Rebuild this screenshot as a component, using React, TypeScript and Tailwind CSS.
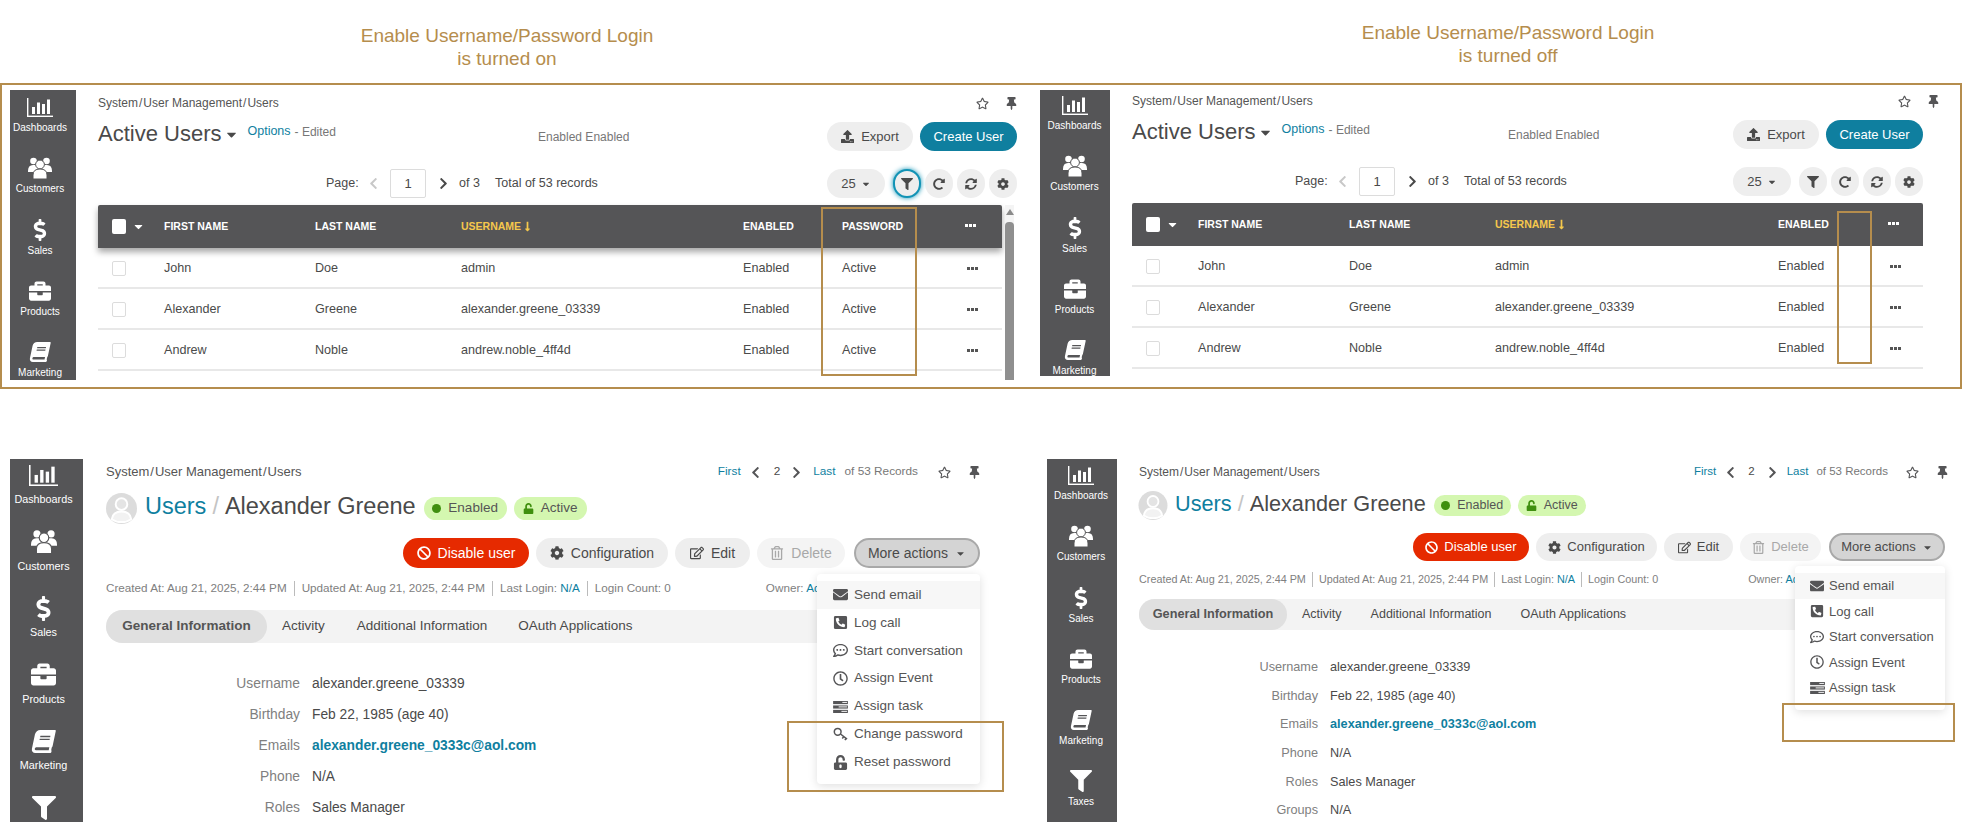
import React from 'react';
import {
  FaBan, FaBook, FaBriefcase, FaCaretDown, FaChevronLeft, FaChevronRight, FaCog, FaDollarSign, FaEnvelope, FaFilter,
  FaLongArrowAltDown, FaPhoneSquareAlt, FaRedoAlt, FaRegClock, FaRegCommentDots, FaRegEdit, FaRegStar,
  FaRegTrashAlt, FaSyncAlt, FaThumbtack, FaUnlock, FaUnlockAlt, FaUpload,
} from 'react-icons/fa';

// Dashboards icon: axes and four bars
const ChartIcon = ({ className }: { className: string }) => (
  <svg className={className} viewBox="0 0 26 19" fill="#fff" preserveAspectRatio="none">
    <rect x="0" y="0" width="1.4" height="19" />
    <rect x="0" y="17.6" width="26" height="1.4" />
    <rect x="5" y="9" width="3" height="7" />
    <rect x="10" y="4.5" width="3" height="11.5" />
    <rect x="15" y="6" width="3" height="10" />
    <rect x="20" y="1.5" width="3" height="14.5" />
  </svg>
);

const PeopleIcon = ({ className }: { className: string }) => (
  <svg className={className} viewBox="0 0 24 22" fill="#fff">
    <circle cx="5.5" cy="4" r="3.3" />
    <circle cx="18.5" cy="4" r="3.3" />
    <path d="M0 14q0-6 5-6h14q5 0 5 6v1H0z" />
    <circle cx="12" cy="7.5" r="4.4" stroke="#555557" strokeWidth="1" />
    <path d="M5 22v-4q0-6 7-6t7 6v4z" stroke="#555557" strokeWidth="1" />
  </svg>
);

const TasksIcon = ({ className }: { className: string }) => (
  <svg className={className} viewBox="0 0 16 13" fill="currentColor">
    <rect x="0" y="0" width="16" height="3.4" />
    <rect x="0" y="4.8" width="16" height="3.4" />
    <rect x="0" y="9.6" width="16" height="3.4" />
    <rect x="10" y="1" width="5" height="1" fill="#fff" />
    <rect x="6" y="5.9" width="9" height="1" fill="#fff" />
    <rect x="9" y="10.7" width="6" height="1" fill="#fff" />
  </svg>
);

const KeyIcon = ({ className }: { className: string }) => (
  <svg className={className} viewBox="0 0 16 14" fill="none" stroke="currentColor" strokeWidth="1.6">
    <circle cx="5" cy="4.6" r="3.6" />
    <path d="M8 7l7 5.5M11.5 9.8l-1.6 2M14 11.7l-1.3 1.8" />
  </svg>
);

const Avatar = ({ className }: { className: string }) => (
  <svg className={className} viewBox="0 0 32 32">
    <circle cx="16" cy="16" r="16" fill="#dcdcdc" />
    <circle cx="16" cy="11.5" r="6" fill="#e4e4e4" stroke="#fff" strokeWidth="2" />
    <path d="M6 27q1-8 10-8t10 8q-4 3-10 3t-10-3z" fill="#f2f2f2" stroke="#fff" strokeWidth="2" />
  </svg>
);

const Dots = () => (
  <span className="flex gap-px">
    <span className="w-[3px] h-[3px] bg-current" />
    <span className="w-[3px] h-[3px] bg-current" />
    <span className="w-[3px] h-[3px] bg-current" />
  </span>
);

const navItems = [
  { label: 'Dashboards', icon: 'chart' },
  { label: 'Customers', icon: 'people' },
  { label: 'Sales', icon: 'dollar' },
  { label: 'Products', icon: 'case' },
  { label: 'Marketing', icon: 'book' },
  { label: 'Taxes', icon: 'filter' },
];

const NavIcon = ({ name, big }: { name: string; big?: boolean }) => {
  if (name === 'chart') return <ChartIcon className={big ? 'w-[29px] h-[21px]' : 'w-[26px] h-[19px]'} />;
  if (name === 'people') return <PeopleIcon className={big ? 'w-[26px] h-[25px]' : 'w-[24px] h-[22px]'} />;
  if (name === 'dollar') return <FaDollarSign className={big ? 'text-[25px]' : 'text-[22px]'} />;
  if (name === 'case') return <FaBriefcase className={big ? 'text-[25px]' : 'text-[22px]'} />;
  if (name === 'book') return <FaBook className={big ? 'text-[23px] -skew-x-12' : 'text-[20px] -skew-x-12'} />;
  return <FaFilter className={big ? 'text-[24px]' : 'text-[22px]'} />;
};

const Sidebar = ({ className, itemClass, iconBox, labelClass, big }: { className: string; itemClass: string; iconBox: string; labelClass: string; big?: boolean }) => (
  <div className={`shrink-0 bg-[#555557] text-white overflow-hidden ${className}`}>
    {navItems.map((item) => (
      <div key={item.label} className={`flex flex-col items-center ${itemClass}`}>
        <div className={`flex items-center justify-center ${iconBox}`}>
          <NavIcon name={item.icon} big={big} />
        </div>
        <div className={`leading-[14px] ${labelClass}`}>{item.label}</div>
      </div>
    ))}
  </div>
);

const Crumbs = ({ className }: { className: string }) => (
  <div className={`flex items-center text-[#555] ${className}`}>
    System<span className="mx-[1px]">/</span>User Management<span className="mx-[1px]">/</span>Users
  </div>
);

const StarPin = ({ gap }: { gap: string }) => (
  <div className="flex items-center text-[#555557]">
    <FaRegStar className="text-[13px]" />
    <FaThumbtack className={`text-[13px] ${gap}`} />
  </div>
);

const RoundBtn = ({ children, focus }: { children: React.ReactNode; focus?: boolean }) => (
  <div className={`w-[28px] h-[29px] rounded-full flex items-center justify-center text-[#4a4a4a] text-[12px] ${focus ? 'border-2 border-[#1293b5] shadow-[0_0_5px_#1293b5] bg-[#eeeeee]' : 'bg-[#eeeeee]'}`}>
    {children}
  </div>
);

const rows = [
  ['John', 'Doe', 'admin'],
  ['Alexander', 'Greene', 'alexander.greene_03339'],
  ['Andrew', 'Noble', 'andrew.noble_4ff4d'],
];

const ListScreen = ({ on }: { on: boolean }) => {
  const cols = on ? 'grid-cols-[66px_151px_146px_282px_99px_118px_42px]' : 'grid-cols-[66px_151px_146px_283px_104px_45px]';
  return (
    <div className={`flex items-start shrink-0 relative ${on ? 'w-[1038px] pl-[8px]' : 'w-[920px]'}`}>
      <Sidebar
        className={on ? 'w-[66px] h-[290px] mt-[5px] pr-[6px]' : 'w-[70px] h-[286px] mt-[5px] pr-[1px]'}
        itemClass="h-[61.25px]"
        iconBox={on ? 'h-[34px]' : 'h-[30px]'}
        labelClass={on ? 'text-[10px] -mt-[3px]' : 'text-[10px] -mt-[1px]'}
      />
      <div className={`pl-[22px] ${on ? 'w-[941px] pt-[8px]' : 'w-[813px] pt-[6px]'}`}>
        <div className="flex items-center justify-between h-[20px]">
          <Crumbs className="text-[12px]" />
          <div className={on ? '-mr-[1px]' : '-mr-[17px]'}><StarPin gap="ml-[16px]" /></div>
        </div>

        <div className="flex items-center h-[29px] mt-[9px]">
          <div className={`flex items-center shrink-0 pb-[5px] ${on ? 'w-[440px]' : 'w-[376px]'}`}>
            <span className="text-[22px] text-[#4a4a4a] leading-none">Active Users</span>
            <FaCaretDown className="text-[15px] text-[#4a4a4a] ml-[3px]" />
            <span className="text-[12.5px] text-[#0f7f9f] ml-[8px] -mt-[5px]">Options</span>
            <span className="text-[12px] text-[#777] ml-[4px] -mt-[4px]">- Edited</span>
          </div>
          <span className="text-[12px] text-[#777]">Enabled Enabled</span>
          <div className="ml-auto flex gap-[7px] text-[13px]">
            <div className="w-[86px] h-[29px] rounded-full bg-[#eeeeee] text-[#4a4a4a] flex items-center justify-center gap-[7px]">
              <FaUpload className="text-[13px]" />Export
            </div>
            <div className="w-[97px] h-[29px] rounded-full bg-[#0f7f9f] text-white flex items-center justify-center">Create User</div>
          </div>
        </div>

        <div className="flex items-center h-[29px] mt-[18px] text-[12.5px] text-[#4a4a4a]">
          <div className={`shrink-0 ${on ? 'w-[228px]' : 'w-[163px]'}`} />
          <span className="w-[39px]">Page:</span>
          <span className="w-[16px] flex justify-center text-[#c8c8c8] text-[13px]"><FaChevronLeft /></span>
          <span className="ml-[9px] w-[36px] h-[29px] border border-[#dcdcdc] rounded-[2px] flex items-center justify-center text-[13px]">1</span>
          <span className="ml-[9px] w-[16px] flex justify-center text-[#4a4a4a] text-[13px]"><FaChevronRight /></span>
          <span className="ml-[8px] w-[36px]">of 3</span>
          <span>Total of 53 records</span>
          <div className="ml-auto flex items-center gap-[4px]">
            <div className="w-[58px] h-[29px] rounded-full bg-[#eeeeee] flex items-center justify-center gap-[5px] text-[13px] mr-[4px]">
              25<FaCaretDown className="text-[10px]" />
            </div>
            <RoundBtn focus={on}><FaFilter /></RoundBtn>
            <RoundBtn><FaRedoAlt /></RoundBtn>
            <RoundBtn><FaSyncAlt /></RoundBtn>
            <RoundBtn><FaCog /></RoundBtn>
          </div>
        </div>

        <div className="flex mt-[7px]">
          <div className={on ? 'w-[904px]' : 'w-[791px]'}>
            <div className={`grid items-center h-[43px] rounded-t-[2px] bg-[#555557] text-white text-[10.5px] font-bold ${cols} ${on ? 'shadow-[0_4px_6px_rgba(0,0,0,0.35)]' : ''}`}>
              <div className="flex items-center pl-[14px]">
                <span className="w-[14px] h-[15px] bg-white rounded-[2px]" />
                <FaCaretDown className="text-[13px] ml-[6px]" />
              </div>
              <div>FIRST NAME</div>
              <div>LAST NAME</div>
              <div className="flex items-center text-[#f5c84c]">USERNAME<FaLongArrowAltDown className="text-[11px] ml-[1px]" /></div>
              <div>ENABLED</div>
              {on && <div>PASSWORD</div>}
              <div className={on ? 'pl-[5px] -mt-[2px]' : 'pl-[6px] -mt-[2px]'}><Dots /></div>
            </div>
            {rows.map((r) => (
              <div key={r[0]} className={`grid items-center h-[41px] border-b-2 border-[#e8e8e8] pt-[1px] text-[12.6px] text-[#4a4a4a] ${cols}`}>
                <div className="pl-[14px]"><span className="block w-[14px] h-[15px] border border-[#dcdcdc] rounded-[2px]" /></div>
                <div>{r[0]}</div>
                <div>{r[1]}</div>
                <div>{r[2]}</div>
                <div>Enabled</div>
                {on && <div>Active</div>}
                <div className={on ? 'pl-[7px] text-[#555]' : 'pl-[8px] text-[#555]'}><Dots /></div>
              </div>
            ))}
          </div>
          {on && (
            <div className="ml-[3px] w-[9px] h-[175px] flex flex-col items-center bg-[#f4f4f4]">
              <span className="mt-[4px] w-0 h-0 border-x-[4px] border-x-transparent border-b-[6px] border-b-[#8a8a8a]" />
              <span className="mt-[7px] w-[9px] flex-1 bg-[#8f8f8f] rounded-t-[4px]" />
            </div>
          )}
        </div>
      </div>
      <div className={`absolute border-2 border-[#b58d4d] ${on ? 'left-[818.5px] top-[122px] w-[96px] h-[169px]' : 'left-[797px] top-[126px] w-[35px] h-[153px]'}`} />
    </div>
  );
};

const menuItems = [
  { label: 'Send email', icon: <FaEnvelope /> },
  { label: 'Log call', icon: <FaPhoneSquareAlt /> },
  { label: 'Start conversation', icon: <FaRegCommentDots /> },
  { label: 'Assign Event', icon: <FaRegClock /> },
  { label: 'Assign task', icon: <TasksIcon className="w-[15px] h-[12px]" /> },
];
const passwordItems = [
  { label: 'Change password', icon: <KeyIcon className="w-[15px] h-[14px]" /> },
  { label: 'Reset password', icon: <FaUnlockAlt /> },
];

const details = [
  ['Username', 'alexander.greene_03339'],
  ['Birthday', 'Feb 22, 1985 (age 40)'],
  ['Emails', 'alexander.greene_0333c@aol.com'],
  ['Phone', 'N/A'],
  ['Roles', 'Sales Manager'],
  ['Groups', 'N/A'],
];

const DetailScreen = ({ on }: { on: boolean }) => {
  const items = on ? [...menuItems, ...passwordItems] : menuItems;
  const btn = `rounded-full flex items-center justify-center ${on ? 'h-[30px] gap-[7px]' : 'h-[28px] gap-[6px]'}`;
  const sep = 'border-l border-[#bbb] h-[15px]';
  return (
    <div className={`flex items-start shrink-0 ${on ? 'w-[1047px] pl-[10px]' : 'w-[915px]'}`}>
      <Sidebar
        className={on ? 'w-[73px] h-[363px] mt-[70px] pr-[6px]' : 'w-[70px] h-[363px] mt-[70px] pr-[2px]'}
        itemClass={on ? 'h-[66.5px]' : 'h-[61.3px]'}
        iconBox="h-[32px]"
        labelClass={on ? 'text-[10.8px] mt-[1px]' : 'text-[10px] -mt-[2px]'}
        big={on}
      />
      <div className={`pt-[73px] ${on ? 'w-[897px] pl-[23px] text-[14px]' : 'w-[828px] pl-[22px] text-[13px]'}`}>
        <div className="flex items-center justify-between h-[20px]">
          <Crumbs className={on ? 'text-[13px]' : 'text-[12px]'} />
          <div className={`flex items-center ${on ? 'text-[11.8px] -mr-[1px]' : 'text-[11.5px] -mr-[4px]'}`}>
            <span className="text-[#0f7f9f]">First</span>
            <FaChevronLeft className="ml-[8px] text-[#555557] text-[13px]" />
            <span className={`text-[#4a4a4a] ${on ? 'ml-[12px]' : 'ml-[11px]'}`}>2</span>
            <FaChevronRight className={`text-[#555557] text-[13px] ${on ? 'ml-[10px]' : 'ml-[11px]'}`} />
            <span className={`text-[#0f7f9f] ${on ? 'ml-[10px]' : 'ml-[8px]'}`}>Last</span>
            <span className={`text-[#777] ${on ? 'ml-[9px]' : 'ml-[8px]'}`}>of 53 Records</span>
            <span className={on ? 'ml-[20px]' : 'ml-[18px]'}><StarPin gap="ml-[17px]" /></span>
          </div>
        </div>

        <div className={`flex items-center ${on ? 'h-[31px] mt-[11px]' : 'h-[29px] mt-[9px]'}`}>
          <Avatar className={on ? 'w-[33px] h-[31px] -ml-[1px]' : 'w-[30px] h-[29px] -ml-[1px]'} />
          <span className={`ml-[7px] leading-none pb-[3px] ${on ? 'text-[23.5px]' : 'text-[21.7px]'}`}>
            <span className="text-[#0f7f9f]">Users</span>
            <span className="text-[#c4c4c4] mx-[6px]">/</span>
            <span className="text-[#4a4a4a]">Alexander Greene</span>
          </span>
          <span className={`flex items-center justify-center rounded-full bg-[#d4f7b0] text-[#555] ml-[8px] gap-[7px] ${on ? 'w-[83px] h-[23px] text-[13.5px]' : 'w-[77px] h-[21px] text-[12.5px]'}`}>
            <span className="w-[9px] h-[9px] rounded-full bg-[#3f8f0f]" />Enabled
          </span>
          <span className={`flex items-center justify-center rounded-full bg-[#d4f7b0] text-[#555] ml-[7px] gap-[7px] ${on ? 'w-[73px] h-[23px] text-[13.5px]' : 'w-[68px] h-[21px] text-[12.5px]'}`}>
            <FaUnlock className="text-[11px] text-[#3f8f0f]" />Active
          </span>
        </div>

        <div className={`flex justify-end gap-[7px] ${on ? 'mt-[14px]' : 'mt-[13px]'}`}>
          <div className={`${btn} bg-[#e62a00] text-white ${on ? 'w-[126px]' : 'w-[116px]'}`}><FaBan />Disable user</div>
          <div className={`${btn} bg-[#eeeeee] text-[#4a4a4a] ${on ? 'w-[132px]' : 'w-[121px]'}`}><FaCog />Configuration</div>
          <div className={`${btn} bg-[#eeeeee] text-[#4a4a4a] ${on ? 'w-[75px]' : 'w-[69px]'}`}><FaRegEdit />Edit</div>
          <div className={`${btn} bg-[#f4f4f4] text-[#a8a8a8] ${on ? 'w-[88px]' : 'w-[81px]'}`}><FaRegTrashAlt />Delete</div>
          <div className={`relative ${on ? 'ml-[2px]' : 'ml-[1px]'}`}>
            <div className={`${btn} border-2 border-[#a9a9a9] bg-[#d4d4d4] text-[#4a4a4a] ${on ? 'w-[126px]' : 'w-[116px]'}`}>More actions<FaCaretDown className="text-[11px]" /></div>
            <div className={`absolute right-0 z-10 bg-white rounded-[4px] shadow-[0_2px_10px_rgba(0,0,0,0.13)] py-[7px] ${on ? 'top-[36px] w-[163px] h-[210px] text-[13.5px]' : 'top-[33px] w-[150px] h-[144px] text-[13px]'} text-[#555]`}>
              {items.map((it, i) => (
                <div key={it.label} className={`flex items-center ${on ? 'h-[27.9px]' : 'h-[25.5px]'} ${i === 0 ? 'bg-[#f7f7f7]' : ''}`}>
                  <span className={`flex justify-center text-[#555557] ${on ? 'w-[37px] pl-[9px] text-[15px]' : 'w-[34px] pl-[10px] text-[14px]'}`}>{it.icon}</span>
                  <span className="whitespace-nowrap">{it.label}</span>
                </div>
              ))}
              <div className={`absolute border-2 border-[#b58d4d] ${on ? '-left-[30px] top-[147px] w-[217px] h-[71px]' : '-left-[13px] top-[137px] w-[173px] h-[39px]'}`} />
            </div>
          </div>
        </div>

        <div className={`flex items-center text-[#808080] whitespace-nowrap ${on ? 'h-[16px] mt-[12px] text-[11.7px] gap-[7px]' : 'h-[16px] mt-[10px] text-[10.8px] gap-[6px]'}`}>
          <span>Created At: Aug 21, 2025, 2:44 PM</span>
          <span className={sep} />
          <span>Updated At: Aug 21, 2025, 2:44 PM</span>
          <span className={sep} />
          <span>Last Login: <span className="text-[#0f7f9f]">N/A</span></span>
          <span className={sep} />
          <span>Login Count: 0</span>
          <span className={on ? 'ml-[88px]' : 'ml-[84px]'}>Owner: <span className="text-[#0f7f9f]">Admin</span></span>
        </div>

        <div className={`flex items-center bg-[#f3f3f3] rounded-l-full text-[#4a4a4a] ${on ? 'h-[33px] mt-[14px] text-[13.5px]' : 'h-[31px] mt-[12px] text-[12.5px]'}`}>
          <span className={`h-full rounded-full bg-[#e0e0e0] flex items-center justify-center font-bold text-[#555] ${on ? 'w-[161px] text-[13.5px]' : 'w-[148px] text-[12.7px]'}`}>General Information</span>
          <span className="ml-[15px]">Activity</span>
          <span className={on ? 'ml-[32px]' : 'ml-[29px]'}>Additional Information</span>
          <span className={on ? 'ml-[31px]' : 'ml-[29px]'}>OAuth Applications</span>
        </div>

        <div className={on ? 'mt-[26px] text-[13.8px]' : 'mt-[23px] text-[12.7px]'}>
          {details.map((d) => (
            <div key={d[0]} className={`flex items-center ${on ? 'h-[31px]' : 'h-[28.7px]'}`}>
              <span className={`text-right text-[#808080] ${on ? 'w-[194px]' : 'w-[179px]'}`}>{d[0]}</span>
              <span className={`ml-[12px] ${d[0] === 'Emails' ? 'text-[#0f7f9f] font-bold' : 'text-[#4a4a4a]'}`}>{d[1]}</span>
            </div>
          ))}
        </div>
      </div>
    </div>
  );
};

export default function App() {
  return (
    <div className="w-[1962px] h-[822px] overflow-hidden bg-white [font-family:'Liberation_Sans',sans-serif]">
      <div className="flex h-[83px] text-[19px] leading-[23px] text-[#b58d4d] text-center">
        <div className="w-[1054px] pr-[40px] pt-[24px]">Enable Username/Password Login<br />is turned on</div>
        <div className="flex-1 pt-[21px]">Enable Username/Password Login<br />is turned off</div>
      </div>
      <div className="flex h-[306px] border-2 border-[#b58d4d] overflow-hidden">
        <ListScreen on />
        <ListScreen on={false} />
      </div>
      <div className="flex h-[433px] overflow-hidden">
        <DetailScreen on />
        <DetailScreen on={false} />
      </div>
    </div>
  );
}
